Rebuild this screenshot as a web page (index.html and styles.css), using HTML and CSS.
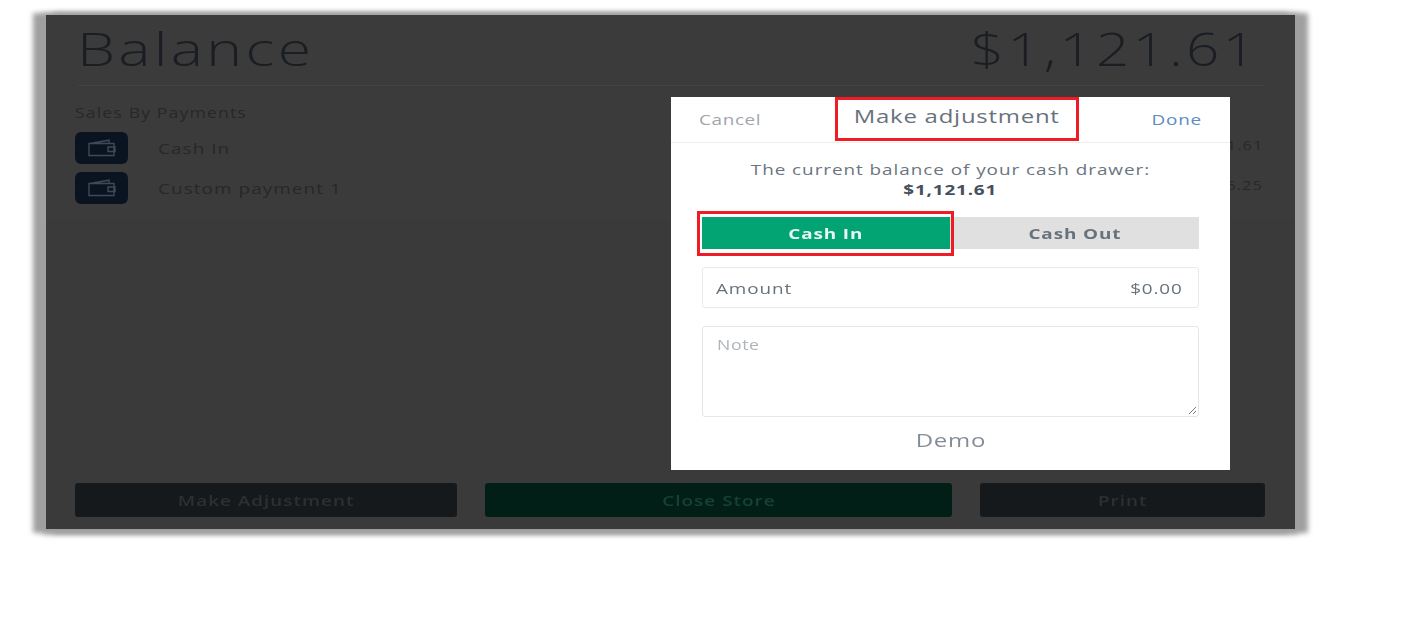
FILE: index.html
```html
<!DOCTYPE html>
<html>
<head>
<meta charset="utf-8" />
<title>Balance</title>
<link rel="stylesheet" href="styles.css">
</head>
<body>
<div class="screen">
    <div class="top">
        <div class="head">
            <span class="head-title wide left">Balance</span>
            <span class="head-total wide right">$1,121.61</span>
        </div>
        <div class="sales-title"><span class="wide left">Sales By Payments</span></div>
        <div class="pay-row">
            <span class="pay-icon">
                <svg width="28" height="18" viewBox="0 0 28 18" fill="none" stroke="#3e4a58" stroke-width="1.4"><path d="M1 4.500h25v12H1zM2 4.500L21 1.200v3.300M20 8h7v4.500h-7z"/></svg>
            </span>
            <span class="pay-name"><span class="wide left">Cash In</span></span>
            <span class="pay-sum wide right">$1,121.61</span>
        </div>
        <div class="pay-row">
            <span class="pay-icon">
                <svg width="28" height="18" viewBox="0 0 28 18" fill="none" stroke="#3e4a58" stroke-width="1.4"><path d="M1 4.500h25v12H1zM2 4.500L21 1.200v3.300M20 8h7v4.500h-7z"/></svg>
            </span>
            <span class="pay-name"><span class="wide left">Custom payment 1</span></span>
            <span class="pay-sum wide right">$116.25</span>
        </div>
    </div>
    <div class="bottom">
        <a class="btn btn-adjust"><span class="wide">Make Adjustment</span></a>
        <a class="btn btn-close"><span class="wide">Close Store</span></a>
        <a class="btn btn-print"><span class="wide">Print</span></a>
    </div>

    <div class="modal">
        <div class="modal-head">
            <a class="modal-cancel wide left">Cancel</a>
            <span class="modal-title wide">Make adjustment</span>
            <a class="modal-done wide right">Done</a>
        </div>
        <div class="modal-body">
            <div class="drawer">
                <span class="wide">The current balance of your cash drawer:</span><br />
                <b class="wide">$1,121.61</b>
            </div>
            <div class="seg">
                <span class="seg-in"><span class="wide">Cash In</span></span>
                <span class="seg-out"><span class="wide">Cash Out</span></span>
            </div>
            <div class="amount"><span class="wide left">Amount</span><span class="wide right">$0.00</span></div>
            <div class="note">
                <span class="wide left">Note</span>
                <svg class="grip" width="9" height="9" viewBox="0 0 9 9" stroke="#777" stroke-width="1"><path d="M1 8L8 1M5 8L8 5"/></svg>
            </div>
            <div class="demo"><span class="wide">Demo</span></div>
        </div>
    </div>
    <div class="mark mark-title"></div>
    <div class="mark mark-cash"></div>
</div>
</body>
</html>
```

FILE: styles.css
```css
html,body {margin:0;padding:0;height:100%;}
body {background-color:#FFF; color:#222; font:15px "Open Sans",sans-serif; overflow:hidden;}
a {text-decoration:none;}

/* the screenshot is stretched sideways, text has to follow */
.wide {display:inline-block; transform:scaleX(1.26); white-space:nowrap;}
.left {transform-origin:left center;}
.right {transform-origin:right center;}

.screen {
    width:1249px;
    height:514px;
    position:relative;
    top:15px;
    left:46px;
    display:flex;
    flex-direction:column;
    background-color:#393a39;
    box-shadow:-10px 1px 5px 3px #a0a0a0, 10px 1px 5px 3px #a0a0a0, 0 2px 6px 3px #aaa;
    filter:blur(.45px);
}

.top {height:204px; padding:0 30px 0 29px; background-color:#3b3b3b; box-sizing:border-box;}
.head {
    height:70px;
    margin-left:3px;
    border-bottom:1px solid #434343;
    display:flex;
    justify-content:space-between;
    align-items:center;
    font-weight:300;
    font-size:46px;
    color:#1a1d22;
    letter-spacing:2.5px;
}
.head-title {position:relative; top:-2px; left:-1px; transform:scaleX(1.32);}
.head-total {position:relative; top:-2px; left:-6px; transform:scaleX(1.27);}
.sales-title {margin-top:16px; height:22px; line-height:22px; font-size:14px; color:#26282b; letter-spacing:.9px;}
.pay-row {display:flex; align-items:center; height:32px; margin-top:8px; color:#26282b; letter-spacing:.85px;}
.sales-title + .pay-row {margin-top:8px;}
.pay-icon {width:53px; height:32px; border-radius:6px; background-color:#0a1420; display:flex; align-items:center; justify-content:center; margin-right:30px;}
.pay-name {flex:1;}
.pay-sum {font-size:13px; position:relative; top:-3px; left:-2px;}

.bottom {flex:1; display:flex; gap:28px; align-items:flex-end; padding:0 30px 12px 29px;}
.btn {height:34px; line-height:34px; text-align:center; border-radius:3px; font-size:15px; font-weight:600; letter-spacing:.8px; color:#2d3033;}
.btn-adjust {width:382px; background-color:#16191c;}
.btn-close {width:467px; background-color:#021f17; color:#174135;}
.btn-print {width:285px; background-color:#16191c;}

.modal {position:absolute; left:625px; top:82px; width:559px; height:373px; background-color:#FFF;}
.modal-head {
    height:46px;
    box-sizing:border-box;
    border-bottom:1px solid #eee;
    display:flex;
    justify-content:space-between;
    align-items:center;
    padding:0 28px;
}
.modal-cancel {color:#a0a5ab; font-size:15px; letter-spacing:.5px; position:relative; top:-1px;}
.modal-title {color:#68727c; font-size:19px; letter-spacing:.6px; position:relative; top:-4px; left:1px;}
.modal-done {color:#5c8cc0; font-size:15px; letter-spacing:.6px; position:relative; top:-1px;}
.modal-body {padding:0 31px;}
.drawer {margin:16px 0 0; height:58px; line-height:20px; text-align:center; color:#6b7580; font-size:15px; letter-spacing:.75px;}
.drawer b {color:#46505c; font-weight:700; letter-spacing:.65px;}
.seg {display:flex; height:32px; background-color:#e0e0e0; font-weight:700; font-size:15px; letter-spacing:.7px;}
.seg > span {display:block; line-height:32px; text-align:center;}
.seg-in {width:248px; background-color:#03a474; color:#e8f7f1;}
.seg-out {flex:1; color:#68727c;}
.amount {
    margin-top:18px;
    height:41px;
    box-sizing:border-box;
    border:1px solid #eaeaea;
    border-radius:3px;
    padding:0 15px 0 13px;
    display:flex;
    justify-content:space-between;
    align-items:center;
    color:#68727c;
    font-size:15px;
    letter-spacing:.7px;
}
.note {
    margin-top:18px;
    height:91px;
    box-sizing:border-box;
    border:1px solid #e6e6e6;
    border-radius:3px;
    padding:8px 14px;
    color:#b0b4b8;
    font-size:14px;
    letter-spacing:.5px;
    position:relative;
}
.grip {position:absolute; right:1px; bottom:1px;}
.demo {margin-top:11px; text-align:center; color:#848d96; font-size:19px; letter-spacing:.6px; line-height:24px;}

.mark {position:absolute; border:3px solid #ee1c25; box-sizing:border-box;}
.mark-title {left:789px; top:82px; width:244px; height:44px;}
.mark-cash {left:651px; top:196px; width:257px; height:45px;}
```
